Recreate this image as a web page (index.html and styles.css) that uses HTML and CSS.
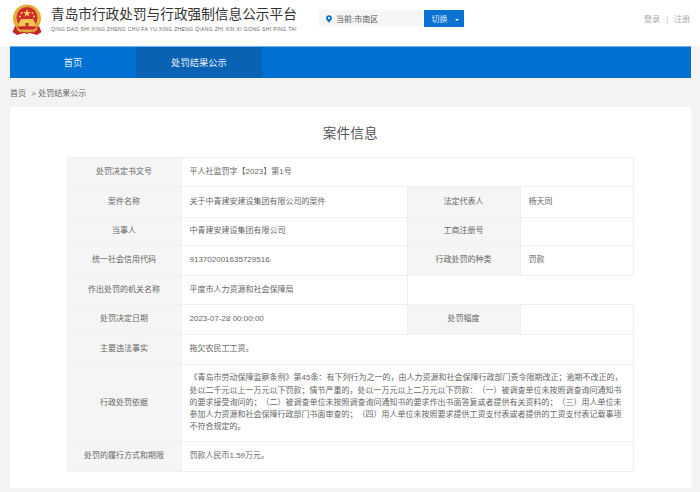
FILE: index.html
```html
<!DOCTYPE html>
<html lang="zh-CN">
<head>
<meta charset="utf-8">
<title>案件信息</title>
<link rel="stylesheet" href="styles.css">
</head>
<body>
<header class="header">
  <div class="brand">
    <svg class="emblem" viewBox="0 0 30 32" width="30" height="32">
      <path d="M3 22 L0.5 28 L5 31 L12 29 L15 30 L18 29 L25 31 L29.500 28 L27 22 Z" fill="#c8242b"/>
      <path d="M5 25 L9 28 M25 25 L21 28 M10 27 H20" stroke="#e9b94a" stroke-width="1.2" fill="none"/>
      <circle cx="15" cy="14.500" r="14" fill="#e3ad3c"/>
      <circle cx="15" cy="13.500" r="10.500" fill="#cf2b2b"/>
      <polygon points="15,5 16,8 19,8 16.600,9.800 17.500,12.800 15,11 12.500,12.800 13.400,9.800 11,8 14,8" fill="#f3cf5b"/>
      <circle cx="9.500" cy="9" r="1" fill="#f3cf5b"/>
      <circle cx="20.500" cy="9" r="1" fill="#f3cf5b"/>
      <circle cx="8" cy="12.500" r="1" fill="#f3cf5b"/>
      <circle cx="22" cy="12.500" r="1" fill="#f3cf5b"/>
      <path d="M9 15 H21 L22.500 18 H7.500 Z" fill="#f0c552"/>
      <rect x="7" y="18" width="16" height="4.500" fill="#f0c552"/>
      <rect x="13.500" y="19" width="3" height="3.500" fill="#b8322a"/>
      <path d="M5 22.500 H25 L22 25.500 H8 Z" fill="#c8242b"/>
    </svg>
    <div class="brand-text">
      <div class="brand-title">青岛市行政处罚与行政强制信息公示平台</div>
      <div class="brand-sub">QING DAO SHI XING ZHENG CHU FA YU XING ZHENG QIANG ZHI XIN XI GONG SHI PING TAI</div>
    </div>
  </div>
  <div class="location">
    <div class="location-box">
      <svg class="pin" viewBox="0 0 8 10" width="6" height="8"><path d="M4 0 C1.800 0 0 1.700 0 3.800 C0 6.500 4 10 4 10 C4 10 8 6.500 8 3.800 C8 1.700 6.200 0 4 0 Z M4 5.300 A1.500 1.500 0 1 1 4 2.300 A1.500 1.500 0 0 1 4 5.300 Z" fill="#0a72cf" fill-rule="evenodd"/></svg>
      <span>当前:市南区</span>
    </div>
    <button class="switch">切换<i class="caret"></i></button>
  </div>
  <div class="account"><span>登录</span><span class="sep">|</span><span>注册</span></div>
</header>

<nav class="nav">
  <a class="nav-item home">首页</a>
  <a class="nav-item active">处罚结果公示</a>
</nav>

<div class="crumbs">首页 <span class="crumb-sep">&gt;</span> 处罚结果公示</div>

<main class="card">
  <h1 class="title">案件信息</h1>
  <table class="info">
    <colgroup><col class="c-l1"><col class="c-v1"><col class="c-l2"><col class="c-v2"></colgroup>
    <tr class="r1"><th>处罚决定书文号</th><td colspan="3">平人社监罚字【2023】第1号</td></tr>
    <tr class="r2"><th>案件名称</th><td>关于中青建安建设集团有限公司的案件</td><th>法定代表人</th><td>杨天同</td></tr>
    <tr class="r3"><th>当事人</th><td>中青建安建设集团有限公司</td><th>工商注册号</th><td></td></tr>
    <tr class="r4"><th>统一社会信用代码</th><td>913702001635729516</td><th>行政处罚的种类</th><td>罚款</td></tr>
    <tr class="r5"><th>作出处罚的机关名称</th><td>平度市人力资源和社会保障局</td><td class="blank" colspan="2"></td></tr>
    <tr class="r6"><th>处罚决定日期</th><td>2023-07-28 00:00:00</td><th>处罚幅度</th><td></td></tr>
    <tr class="r7"><th>主要违法事实</th><td colspan="3">拖欠农民工工资。</td></tr>
    <tr class="r8"><th>行政处罚依据</th><td colspan="3" class="long">《青岛市劳动保障监察条例》第45条：有下列行为之一的，由人力资源和社会保障行政部门责令限期改正；逾期不改正的，处以二千元以上一万元以下罚款；情节严重的，处以一万元以上二万元以下罚款：（一）被调查单位未按照调查询问通知书的要求接受询问的；（二）被调查单位未按照调查询问通知书的要求作出书面答复或者提供有关资料的；（三）用人单位未参加人力资源和社会保障行政部门书面审查的；（四）用人单位未按照要求提供工资支付表或者提供的工资支付表记载事项不符合规定的。</td></tr>
    <tr class="r9"><th>处罚的履行方式和期限</th><td colspan="3">罚款人民币1.59万元。</td></tr>
  </table>
</main>
</body>
</html>
```

FILE: styles.css
```css
* { box-sizing: border-box; }
html, body { margin: 0; padding: 0; }
body {
  width: 700px;
  height: 492px;
  overflow: hidden;
  background: #f3f3f3;
  color: #666;
  font-family: "Liberation Sans", "Noto Sans CJK SC", sans-serif;
  font-size: 8px;
  text-spacing-trim: space-all;
}
.header {
  height: 46px;
  background: #fff;
  display: flex;
  align-items: flex-start;
  padding: 0 10px 0 12px;
}
.brand { display: flex; align-items: flex-start; width: 307px; padding-top: 4px; }
.emblem { display: block; flex: none; margin-right: 9px; }
.brand-text { padding-top: 1px; }
.brand-title {
  font-size: 13.67px;
  line-height: 20px;
  color: #333;
  white-space: nowrap;
}
.brand-sub {
  margin-top: 1px;
  font-size: 5px;
  line-height: 7px;
  color: #666;
  white-space: nowrap;
  letter-spacing: 0.34px;
}
.location { display: flex; padding-top: 10px; }
.location-box {
  width: 104px;
  height: 17px;
  background: #f6f6f6;
  display: flex;
  align-items: center;
  padding-left: 7px;
  color: #555;
}
.pin { margin-right: 4px; }
.switch {
  width: 40px;
  height: 17px;
  margin-left: 1px;
  padding: 0 0 0 2px;
  border: 0;
  background: #0a72d2;
  color: #dce9f6;
  font: inherit;
  display: flex;
  align-items: center;
  justify-content: center;
}
.caret {
  margin-left: 7px;
  margin-top: 2px;
  border-left: 2px solid transparent;
  border-right: 2px solid transparent;
  border-top: 2px solid #fff;
}
.account {
  margin-left: auto;
  padding-top: 14px;
  color: #aaa;
  line-height: 11px;
  display: flex;
  gap: 6px;
}
.account .sep { color: #bbb; }
.nav {
  margin: 0 9.500px 0 10px;
  height: 31.500px;
  display: flex;
  background: #0070d2;
  border-top: 1px solid #6db0ea;
}
.nav-item {
  height: 100%;
  color: #e8f1fa;
  font-size: 9.300px;
  display: flex;
  align-items: center;
  justify-content: center;
}
.home { width: 126px; }
.active { width: 126px; background: #0a62b4; }
.crumbs {
  height: 29.500px;
  padding-left: 10px;
  line-height: 32px;
  color: #666;
}
.crumb-sep { margin: 0 0 0 3px; }
.card {
  margin: 0 9.500px 0 10px;
  height: 381px;
  background: #fff;
  padding: 0 57px;
}
.title {
  margin: 0;
  height: 50px;
  font-weight: 400;
  font-size: 13.700px;
  line-height: 54px;
  color: #555;
  text-align: center;
}
.info {
  table-layout: fixed;
  width: 566px;
  border-collapse: collapse;
  border: 1px solid #f0f0f0;
}
.c-l1 { width: 114px; }
.c-v1 { width: 226px; }
.c-l2 { width: 113px; }
.c-v2 { width: 113px; }
.info th, .info td {
  border: 1px solid #f0f0f0;
  font-size: 8px;
  font-weight: 400;
  color: #666;
  padding: 0 7px 0 7.500px;
  line-height: 12.200px;
}
.info th { background: #f5f5f5; text-align: center; padding: 0 1px 0 0; white-space: nowrap; }
.info td { background: #fff; text-align: left; }
.info .blank { border-right-color: #fff; border-bottom-color: #f0f0f0; }
.r1 { height: 29px; }
.r2 { height: 30.500px; }
.r3 { height: 28.500px; }
.r4 { height: 30px; }
.r5 { height: 29px; }
.r6 { height: 30px; }
.r7 { height: 30px; }
.r8 { height: 77px; }
.r9 { height: 30px; }
```
